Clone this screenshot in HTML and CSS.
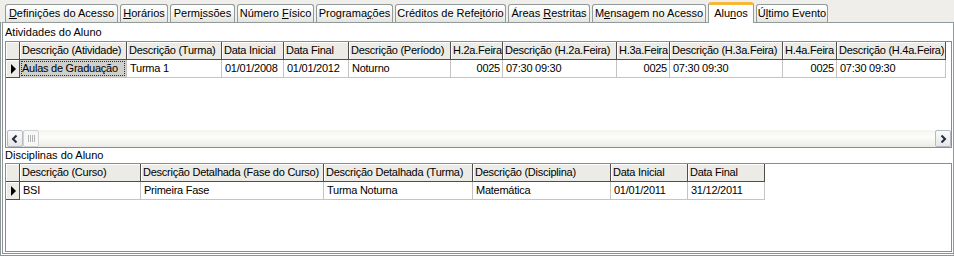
FILE: index.html
```html
<!DOCTYPE html>
<html lang="pt-BR">
<head>
    <meta charset="UTF-8">
    <title>Alunos</title>
    <link rel="stylesheet" href="styles.css">
</head>
<body>

    <div class="tabs">
        <div class="tab t1"><u>D</u>efinições do Acesso</div>
        <div class="tab t2"><u>H</u>orários</div>
        <div class="tab t3">Perm<u>i</u>ssões</div>
        <div class="tab t4">Número <u>F</u>ísico</div>
        <div class="tab t5">Programa<u>ç</u>ões</div>
        <div class="tab t6">Créditos de Refe<u>i</u>tório</div>
        <div class="tab t7">Áreas <u>R</u>estritas</div>
        <div class="tab t8">M<u>e</u>nsagem no Acesso</div>
        <div class="tab t9 active">Alu<u>n</u>os</div>
        <div class="tab t10">Ú<u>l</u>timo Evento</div>
    </div>

    <div class="page">
        <div class="caption cap-top">Atividades do Aluno</div>

        <div class="grid grid-top">
            <div class="row head">
                <div class="cell ind"></div>
                <div class="cell a1">Descrição (Atividade)</div>
                <div class="cell a2">Descrição (Turma)</div>
                <div class="cell a3">Data Inicial</div>
                <div class="cell a4">Data Final</div>
                <div class="cell a5">Descrição (Período)</div>
                <div class="cell a6">H.2a.Feira</div>
                <div class="cell a7">Descrição (H.2a.Feira)</div>
                <div class="cell a8">H.3a.Feira</div>
                <div class="cell a9">Descrição (H.3a.Feira)</div>
                <div class="cell a10">H.4a.Feira</div>
                <div class="cell a11">Descrição (H.4a.Feira)</div>
            </div>
            <div class="row data">
                <div class="cell ind"><span class="arrow"></span></div>
                <div class="cell a1 selected"><span class="focus">Aulas de Graduação</span></div>
                <div class="cell a2">Turma 1</div>
                <div class="cell a3">01/01/2008</div>
                <div class="cell a4">01/01/2012</div>
                <div class="cell a5">Noturno</div>
                <div class="cell a6 num">0025</div>
                <div class="cell a7">07:30 09:30</div>
                <div class="cell a8 num">0025</div>
                <div class="cell a9">07:30 09:30</div>
                <div class="cell a10 num">0025</div>
                <div class="cell a11">07:30 09:30</div>
            </div>
            <div class="filler"></div>
            <div class="hscroll">
                <div class="sbtn">
                    <svg width="8" height="8" viewBox="0 0 8 8"><path d="M5.5 0.5 L2 4 L5.5 7.5" fill="none" stroke="#1e2a44" stroke-width="2"/></svg>
                </div>
                <div class="thumb"><span></span><span></span><span></span><span></span></div>
                <div class="track"></div>
                <div class="sbtn">
                    <svg width="8" height="8" viewBox="0 0 8 8"><path d="M2.5 0.5 L6 4 L2.5 7.5" fill="none" stroke="#1e2a44" stroke-width="2"/></svg>
                </div>
            </div>
        </div>

        <div class="caption cap-bottom">Disciplinas do Aluno</div>

        <div class="grid grid-bottom">
            <div class="row head">
                <div class="cell ind"></div>
                <div class="cell b1">Descrição (Curso)</div>
                <div class="cell b2">Descrição Detalhada (Fase do Curso)</div>
                <div class="cell b3">Descrição Detalhada (Turma)</div>
                <div class="cell b4">Descrição (Disciplina)</div>
                <div class="cell b5">Data Inicial</div>
                <div class="cell b6">Data Final</div>
            </div>
            <div class="row data">
                <div class="cell ind"><span class="arrow"></span></div>
                <div class="cell b1">BSI</div>
                <div class="cell b2">Primeira Fase</div>
                <div class="cell b3">Turma Noturna</div>
                <div class="cell b4">Matemática</div>
                <div class="cell b5">01/01/2011</div>
                <div class="cell b6">31/12/2011</div>
            </div>
        </div>
    </div>

</body>
</html>
```

FILE: styles.css
```css
* {
    margin: 0;
    padding: 0;
    box-sizing: border-box;
}

body {
    width: 954px;
    height: 256px;
    overflow: hidden;
    background: #efeeea;
    font-family: "Liberation Sans", Arial, sans-serif;
    font-size: 11px;
    color: #000;
}

/* Tab strip */
.tabs {
    display: flex;
    align-items: flex-end;
    height: 22px;
    padding-left: 5px;
    position: relative;
    z-index: 2;
}

.tab {
    height: 18px;
    margin-right: 2px;
    border: 1px solid #919b9c;
    border-bottom: none;
    border-radius: 3px 3px 0 0;
    background: linear-gradient(#ffffff, #f3f3ef 60%, #e4e3dc);
    line-height: 17px;
    text-align: center;
    white-space: nowrap;
}

.tab.active {
    height: 21px;
    margin-bottom: -1px;
    border-top: 3px solid #f5b83a;
    background: #ffffff;
    line-height: 16px;
}

.t1 { width: 113px; }
.t2 { width: 48px; }
.t3 { width: 65px; }
.t4 { width: 77px; }
.t5 { width: 77px; }
.t6 { width: 111px; }
.t7 { width: 82px; }
.t8 { width: 114px; }
.t9 { width: 46px; }
.t10 { width: 72px; }

/* Tab page */
.page {
    display: flex;
    flex-direction: column;
    height: 234px;
    background: #ffffff;
    border: 1px solid #919b9c;
    border-left: 3px double #8e9597;
    border-bottom: 3px double #8e9597;
    padding: 0 1px 1px 2px;
}

.caption {
    white-space: nowrap;
}

.cap-top {
    height: 18px;
    line-height: 19px;
}

.cap-bottom {
    height: 15px;
    line-height: 15px;
}

/* Grids */
.grid {
    display: flex;
    flex-direction: column;
    border: 1px solid #8c8c8c;
    background: #ffffff;
    overflow: hidden;
    letter-spacing: -0.25px;
}

.grid-top {
    height: 107px;
}

.grid-bottom {
    height: 89px;
}

.row {
    display: flex;
    height: 18px;
    flex: none;
}

.cell {
    flex: none;
    height: 18px;
    padding: 0 2px 0 3px;
    line-height: 17px;
    white-space: nowrap;
    overflow: hidden;
}

.head .cell {
    background: #ecebe6;
    border-right: 1px solid #4e4e4e;
    border-bottom: 1px solid #4e4e4e;
    box-shadow: inset 1px 1px 0 #ffffff;
    padding: 0 1px 0 2px;
}

.data .cell {
    border-right: 1px solid #c4c4c4;
    border-bottom: 1px solid #c4c4c4;
}

.data .cell.ind {
    background: #ecebe6;
    border-right: 1px solid #4e4e4e;
    border-bottom: 1px solid #4e4e4e;
    box-shadow: inset 1px 1px 0 #ffffff;
    padding: 0;
    display: flex;
    align-items: center;
    justify-content: center;
}

.arrow {
    width: 0;
    height: 0;
    border-top: 5px solid transparent;
    border-bottom: 5px solid transparent;
    border-left: 5px solid #000;
    margin-left: 1px;
}

.num {
    text-align: right;
}

.selected {
    background: #cfcfcc;
    padding: 1px;
}

.focus {
    display: block;
    height: 15px;
    line-height: 14px;
    padding: 0 1px;
    outline: 1px dotted #303030;
    outline-offset: -1px;
}

.ind { width: 14px; }

.a1 { width: 107px; }
.a2 { width: 95px; }
.a3 { width: 62px; }
.a4 { width: 65px; }
.a5 { width: 102px; }
.a6 { width: 52px; }
.a7 { width: 114px; }
.a8 { width: 53px; }
.a9 { width: 113px; }
.a10 { width: 54px; }
.a11 { width: 109px; }

.b1 { width: 121px; }
.b2 { width: 183px; }
.b3 { width: 149px; }
.b4 { width: 138px; }
.b5 { width: 77px; }
.b6 { width: 77px; }

.filler {
    flex: 1;
}

/* Horizontal scrollbar */
.hscroll {
    display: flex;
    height: 17px;
    flex: none;
    padding-left: 1px;
    background: linear-gradient(#f4f4f0, #fdfdfb 40%, #ecebe6);
}

.sbtn {
    width: 16px;
    height: 17px;
    border: 1px solid #b7b9c6;
    border-radius: 2px;
    background: linear-gradient(#fbfbfb, #e6e6e6);
    display: flex;
    align-items: center;
    justify-content: center;
}

.thumb {
    width: 16px;
    height: 17px;
    border: 1px solid #d2d2d2;
    border-radius: 2px;
    background: #f7f7f5;
    display: flex;
    align-items: center;
    justify-content: center;
    gap: 1px;
}

.thumb span {
    width: 1px;
    height: 7px;
    background: #b4b4b4;
}

.track {
    flex: 1;
}
```
